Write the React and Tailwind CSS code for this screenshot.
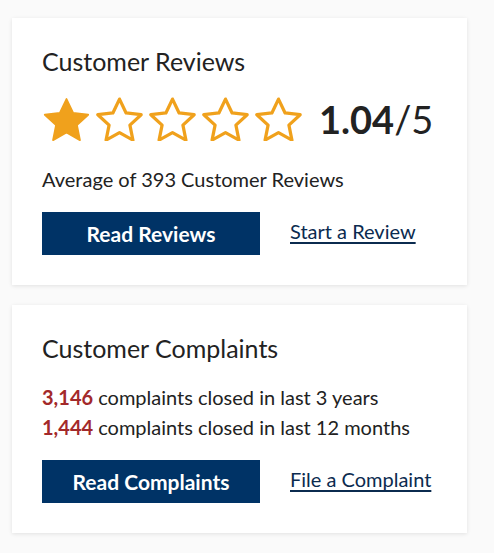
import { useState } from 'react';

function Star({ filled }) {
  return (
    <svg viewBox="1.6 2 20.8 19" className="w-[49px] h-[44px]" fill={filled ? '#f0a11c' : 'none'} stroke="#f0a11c" strokeWidth={filled ? 0.8 : 1.4} strokeLinejoin="round">
      <path d="M12 2.9l2.85 6 6.5.75-4.85 4.5 1.3 6.45L12 17.35l-5.8 3.25 1.3-6.45-4.85-4.5 6.5-.75z" />
    </svg>
  );
}

export default function App() {
  const [rating] = useState(1.04);

  return (
    <div className="min-h-[553px] bg-[#fafafa] pt-[18px] pl-[12px] font-['Lato',sans-serif] text-[#222]">
      {/* Reviews */}
      <div className="w-[455px] bg-white shadow-[0_1px_4px_rgba(0,0,0,0.1)] px-[30px] pt-[28px] pb-[30px]">
        <h2 className="text-[25px] leading-[30px]">Customer Reviews</h2>
        <div className="flex items-center h-[44px] mt-[21px]">
          <div className="flex gap-[4px]">
            {[0, 1, 2, 3, 4].map(i => (
              <Star key={i} filled={i < Math.floor(rating)} />
            ))}
          </div>
          <div className="ml-[16px] text-[38px] leading-[46px]">
            <span className="font-bold">{rating.toFixed(2)}</span>/5
          </div>
        </div>
        <p className="text-[20px] leading-[24px] mt-[26px]">Average of 393 Customer Reviews</p>
        <div className="flex items-center mt-[21px]">
          <button className="w-[218px] h-[43px] bg-[#003366] text-white font-bold text-[21px]">Read Reviews</button>
          <a href="#" className="ml-[30px] mb-[5px] text-[20px] text-[#0b2b4f] underline underline-offset-[3px]">Start a Review</a>
        </div>
      </div>

      {/* Complaints */}
      <div className="w-[455px] mt-[20px] bg-white shadow-[0_1px_4px_rgba(0,0,0,0.1)] px-[30px] pt-[28px] pb-[30px]">
        <h2 className="text-[25px] leading-[30px]">Customer Complaints</h2>
        <p className="text-[20px] leading-[30px] mt-[19px]">
          <span className="font-bold text-[#a3292a]">3,146</span> complaints closed in last 3 years
        </p>
        <p className="text-[20px] leading-[30px]">
          <span className="font-bold text-[#a3292a]">1,444</span> complaints closed in last 12 months
        </p>
        <div className="flex items-center mt-[18px]">
          <button className="w-[218px] h-[43px] bg-[#003366] text-white font-bold text-[21px]">Read Complaints</button>
          <a href="#" className="ml-[30px] mb-[5px] text-[20px] text-[#0b2b4f] underline underline-offset-[3px]">File a Complaint</a>
        </div>
      </div>
    </div>
  );
}
